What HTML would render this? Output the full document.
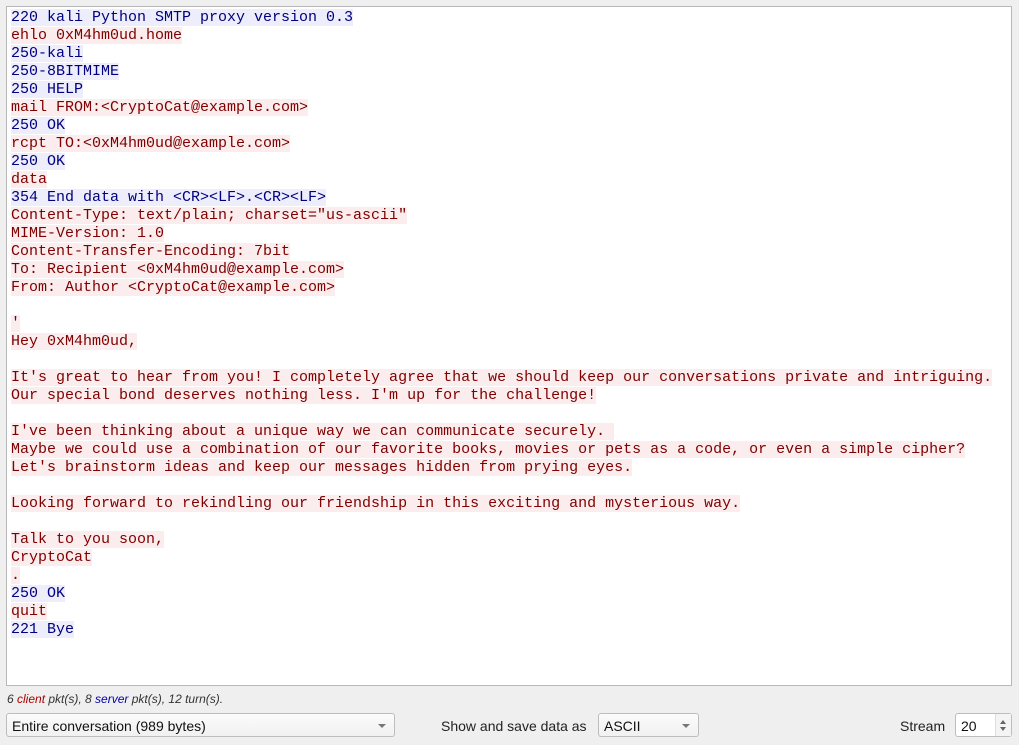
<!DOCTYPE html>
<html><head><style>
body{margin:0;width:1019px;height:745px;background:#efefef;font-family:"Liberation Sans",sans-serif;position:relative;overflow:hidden}
#t{position:absolute;left:6px;top:6px;width:1004px;height:678px;background:#fff;border:1px solid #b8b8b8}
#tx{position:absolute;left:4px;top:2px;font-family:"Liberation Mono",monospace;font-size:15px;line-height:18px;white-space:pre}
.c{color:#7f0000;background:#fbeded}
.s{color:#00007f;background:#ededfb}
.l{height:18px}
.st{position:absolute;left:7px;top:692px;font-size:12px;font-style:italic;color:#333}
.cb{position:absolute;top:713px;height:24px;background:linear-gradient(#fbfbfb,#f1f1f1);border:1px solid #bdbdbd;border-radius:3px;font-size:14px;line-height:24px;box-sizing:border-box;padding-left:5px;color:#111}
.ar{position:absolute;right:8px;top:10px;width:0;height:0;border-left:4px solid transparent;border-right:4px solid transparent;border-top:4px solid #777}
.lb{position:absolute;top:718px;font-size:14px;color:#222}
</style></head><body>
<div id="t"><div id="tx"><div class="l"><span class="s">220 kali Python SMTP proxy version 0.3</span></div><div class="l"><span class="c">ehlo 0xM4hm0ud.home</span></div><div class="l"><span class="s">250-kali</span></div><div class="l"><span class="s">250-8BITMIME</span></div><div class="l"><span class="s">250 HELP</span></div><div class="l"><span class="c">mail FROM:&lt;CryptoCat@example.com&gt;</span></div><div class="l"><span class="s">250 OK</span></div><div class="l"><span class="c">rcpt TO:&lt;0xM4hm0ud@example.com&gt;</span></div><div class="l"><span class="s">250 OK</span></div><div class="l"><span class="c">data</span></div><div class="l"><span class="s">354 End data with &lt;CR&gt;&lt;LF&gt;.&lt;CR&gt;&lt;LF&gt;</span></div><div class="l"><span class="c">Content-Type: text/plain; charset="us-ascii"</span></div><div class="l"><span class="c">MIME-Version: 1.0</span></div><div class="l"><span class="c">Content-Transfer-Encoding: 7bit</span></div><div class="l"><span class="c">To: Recipient &lt;0xM4hm0ud@example.com&gt;</span></div><div class="l"><span class="c">From: Author &lt;CryptoCat@example.com&gt;</span></div><div class="l"></div><div class="l"><span class="c">'</span></div><div class="l"><span class="c">Hey 0xM4hm0ud,</span></div><div class="l"></div><div class="l"><span class="c">It's great to hear from you! I completely agree that we should keep our conversations private and intriguing.</span></div><div class="l"><span class="c">Our special bond deserves nothing less. I'm up for the challenge!</span></div><div class="l"></div><div class="l"><span class="c">I've been thinking about a unique way we can communicate securely. </span></div><div class="l"><span class="c">Maybe we could use a combination of our favorite books, movies or pets as a code, or even a simple cipher?</span></div><div class="l"><span class="c">Let's brainstorm ideas and keep our messages hidden from prying eyes.</span></div><div class="l"></div><div class="l"><span class="c">Looking forward to rekindling our friendship in this exciting and mysterious way.</span></div><div class="l"></div><div class="l"><span class="c">Talk to you soon,</span></div><div class="l"><span class="c">CryptoCat</span></div><div class="l"><span class="c">.</span></div><div class="l"><span class="s">250 OK</span></div><div class="l"><span class="c">quit</span></div><div class="l"><span class="s">221 Bye</span></div></div></div>
<div class="st">6 <span style="color:#a00">client</span> pkt(s), 8 <span style="color:#00a">server</span> pkt(s), 12 turn(s).</div>
<div class="cb" style="left:6px;width:389px">Entire conversation (989 bytes)<div class="ar"></div></div>
<div class="lb" style="left:441px">Show and save data as</div>
<div class="cb" style="left:598px;width:101px">ASCII<div class="ar"></div></div>
<div class="lb" style="left:900px">Stream</div>
<div class="cb" style="left:955px;width:57px;background:#fff">20
<div style="position:absolute;right:0;top:0;width:15px;height:22px;border-left:1px solid #ddd;background:#f4f4f4">
<div style="position:absolute;left:4px;top:6px;border-left:3px solid transparent;border-right:3px solid transparent;border-bottom:4px solid #666"></div>
<div style="position:absolute;left:4px;top:13px;border-left:3px solid transparent;border-right:3px solid transparent;border-top:4px solid #666"></div></div></div>
</body></html>
